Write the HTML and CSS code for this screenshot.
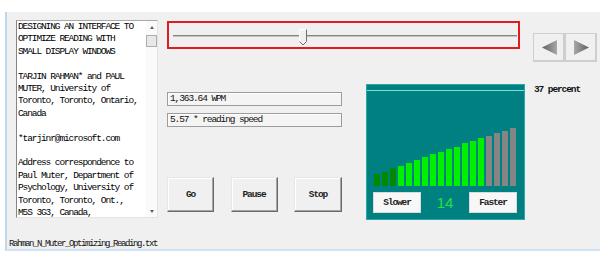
FILE: index.html
```html
<!DOCTYPE html>
<html>
<head>
    <meta charset="utf-8">
    <meta name="viewport" content="width=device-width">
    <title>Reader</title>
    <link rel="stylesheet" href="styles.css">
</head>
<body>
    <div class="window">
        <div class="main">
            <div class="reader">
                <div class="reader-text">
                    <p>DESIGNING AN INTERFACE TO<br>OPTIMIZE READING WITH<br>SMALL DISPLAY WINDOWS</p>
                    <p>TARJIN RAHMAN* and PAUL<br>MUTER, University of<br>Toronto, Toronto, Ontario,<br>Canada</p>
                    <p>*tarjinr@microsoft.com</p>
                    <p>Address correspondence to<br>Paul Muter, Department of<br>Psychology, University of<br>Toronto, Toronto, Ont.,<br>M5S 3G3, Canada,</p>
                </div>
                <div class="scrollbar">
                    <div class="sb-btn"><span class="arrow-up"></span></div>
                    <div class="sb-thumb"></div>
                    <div class="sb-track"></div>
                    <div class="sb-btn"><span class="arrow-down"></span></div>
                </div>
            </div>

            <div class="controls">
                <div class="top-row">
                    <div class="slider">
                        <div class="groove"></div>
                        <svg class="thumb" width="9" height="17" viewBox="0 0 9 17">
                            <polygon points="0.5,0.5 7.5,0.5 7.5,12.5 4,16 0.5,12.5" fill="#f0f0f0"/>
                            <polyline points="0.5,12.5 0.5,0.5 7.5,0.5" fill="none" stroke="#ffffff"/>
                            <polyline points="7.5,0.5 7.5,12.5 4,16 0.5,12.5" fill="none" stroke="#6f6f6f"/>
                        </svg>
                    </div>
                    <div class="nav">
                        <button class="nav-btn" type="button">
                            <svg width="15" height="15" viewBox="0 0 15 15">
                                <defs>
                                    <linearGradient id="gl" x1="0" y1="0" x2="1" y2="0">
                                        <stop offset="0" stop-color="#5f5f5f"/>
                                        <stop offset="1" stop-color="#a8a8a8"/>
                                    </linearGradient>
                                </defs>
                                <polygon points="15,0 0,7.5 15,15" fill="url(#gl)"/>
                            </svg>
                        </button>
                        <button class="nav-btn" type="button">
                            <svg width="15" height="15" viewBox="0 0 15 15">
                                <defs>
                                    <linearGradient id="gr" x1="0" y1="0" x2="1" y2="0">
                                        <stop offset="0" stop-color="#a8a8a8"/>
                                        <stop offset="1" stop-color="#5f5f5f"/>
                                    </linearGradient>
                                </defs>
                                <polygon points="0,0 15,7.5 0,15" fill="url(#gr)"/>
                            </svg>
                        </button>
                    </div>
                </div>

                <div class="mid">
                    <div class="fields">
                        <div class="field">1,363.64 WPM</div>
                        <div class="field">5.57 * reading speed</div>
                        <div class="buttons">
                            <button class="btn" type="button">Go</button>
                            <button class="btn" type="button">Pause</button>
                            <button class="btn btn-wide" type="button">Stop</button>
                        </div>
                    </div>

                    <div class="panel">
                        <div class="bars">
                            <div class="bar dim" style="height: 12px"></div>
                            <div class="bar dim" style="height: 14px"></div>
                            <div class="bar dim" style="height: 18px"></div>
                            <div class="bar on" style="height: 20px"></div>
                            <div class="bar on" style="height: 23px"></div>
                            <div class="bar on" style="height: 26px"></div>
                            <div class="bar on" style="height: 29px"></div>
                            <div class="bar on" style="height: 32px"></div>
                            <div class="bar on" style="height: 34px"></div>
                            <div class="bar on" style="height: 37px"></div>
                            <div class="bar on" style="height: 39px"></div>
                            <div class="bar on" style="height: 43px"></div>
                            <div class="bar on" style="height: 45px"></div>
                            <div class="bar on" style="height: 48px"></div>
                            <div class="bar off" style="height: 50px"></div>
                            <div class="bar off" style="height: 53px"></div>
                            <div class="bar off" style="height: 55px"></div>
                            <div class="bar off" style="height: 58px"></div>
                        </div>
                        <div class="speed-row">
                            <button class="speed-btn" type="button">Slower</button>
                            <span class="speed-value">14</span>
                            <button class="speed-btn" type="button">Faster</button>
                        </div>
                    </div>

                    <div class="pct">37 percent</div>
                </div>
            </div>
        </div>

        <div class="footer">Rahman_N_Muter_Optimizing_Reading.txt</div>
    </div>
</body>
</html>
```

FILE: styles.css
```css
body {
    margin: 0;
    background-color: #fff;
    font-family: "Liberation Mono", monospace;
    font-size: 9.5px;
    letter-spacing: -1.1px;
    color: #111;
}

.window {
    margin: 12px 0 0 5px;
    height: 237px;
    border-left: 2px solid #bfd7ee;
    border-bottom: 2px solid #cfe4f6;
    background-color: #f0f0f0;
    display: flex;
    flex-direction: column;
}

.main {
    display: flex;
    padding: 8px 0 0 9px;
}

/* text box with scrollbar */
.reader {
    width: 142px;
    height: 198px;
    box-sizing: border-box;
    border-left: 1px solid #858585;
    border-top: 1px solid #a8a8a8;
    border-right: 1px solid #e4e4e4;
    border-bottom: 1px solid #e4e4e4;
    background-color: #fff;
    display: flex;
}

.reader-text {
    flex: 1;
    padding-left: 1px;
    line-height: 12.4px;
    white-space: nowrap;
    color: #000;
}

.reader-text p {
    margin: 0 0 12.4px;
}

.scrollbar {
    width: 11px;
    display: flex;
    flex-direction: column;
    background-color: #fafafa;
}

.sb-btn {
    height: 12px;
    display: flex;
    align-items: center;
    justify-content: center;
}

.arrow-up {
    border-left: 2.5px solid transparent;
    border-right: 2.5px solid transparent;
    border-bottom: 3px solid #606060;
}

.arrow-down {
    border-left: 2.5px solid transparent;
    border-right: 2.5px solid transparent;
    border-top: 3px solid #606060;
}

.sb-thumb {
    height: 12px;
    margin-top: 2px;
    box-sizing: border-box;
    border: 1px solid #adadad;
    background-color: #e8e8e8;
}

.sb-track {
    flex: 1;
}

/* right side */
.controls {
    margin-left: 9px;
    display: flex;
    flex-direction: column;
}

.top-row {
    display: flex;
    align-items: flex-start;
    margin-top: 1px;
}

.slider {
    position: relative;
    width: 353px;
    height: 28px;
    box-sizing: border-box;
    border: 2px solid #e21b23;
    padding: 12px 1px 0 4px;
}

.groove {
    height: 1px;
    background-color: #858585;
    border-bottom: 1px solid #c4c4c4;
}

.thumb {
    position: absolute;
    left: 130px;
    top: 6px;
}

.nav {
    display: flex;
    margin: 12px 0 0 13px;
}

.nav-btn {
    width: 32px;
    height: 29px;
    padding: 0;
    box-sizing: border-box;
    background-color: #f0f0f0;
    border: 1px solid;
    border-color: #fff #8e8e8e #8e8e8e #fff;
    box-shadow: inset -1px -1px #cdcdcd;
    outline: 1px solid #cfcfcf;
    outline-offset: -1px;
    display: flex;
    align-items: center;
    justify-content: center;
}

.mid {
    display: flex;
    align-items: flex-start;
    margin-top: 22px;
}

.fields {
    width: 175px;
    padding-top: 8px;
}

.field {
    height: 14px;
    box-sizing: border-box;
    border: 1px solid #9c9c9c;
    box-shadow: inset 1px 1px #fff;
    background-color: #f4f4f4;
    padding-left: 2px;
    line-height: 12px;
}

.field + .field {
    margin-top: 7px;
}

.buttons {
    display: flex;
    justify-content: space-between;
    margin-top: 50px;
}

.btn {
    width: 47px;
    height: 35px;
    padding: 0;
    box-sizing: border-box;
    background-color: #f0f0f0;
    border: 1px solid;
    border-color: #e6e6e6 #6b6b6b #6b6b6b #e6e6e6;
    box-shadow: inset -1px -1px #a4a4a4, inset 1px 1px #fff;
    font-family: inherit;
    font-size: 9.5px;
    font-weight: bold;
    letter-spacing: -1.1px;
    color: #222;
}

.btn-wide {
    width: 48px;
}

/* speed meter */
.panel {
    width: 159px;
    height: 136px;
    margin-left: 24px;
    box-sizing: border-box;
    border: 1px solid #2aa8a8;
    background-color: #008080;
    padding-top: 5px;
}

.bars {
    height: 95px;
    border-top: 1px solid #7fdcdc;
    display: flex;
    align-items: flex-end;
    gap: 2px;
    padding-left: 7px;
}

.bar {
    width: 6px;
}

.bar.dim {
    background-color: #008a00;
}

.bar.on {
    background-color: #00f000;
}

.bar.off {
    background-color: #858585;
}

.speed-row {
    display: flex;
    align-items: center;
    margin-top: 6px;
    padding: 0 7px 0 6px;
}

.speed-btn {
    width: 48px;
    height: 21px;
    padding: 0;
    background-color: #f7f7f7;
    border: 1px solid #dadada;
    font-family: inherit;
    font-size: 9.5px;
    font-weight: bold;
    letter-spacing: -1.1px;
    color: #222;
}

.speed-value {
    flex: 1;
    text-align: center;
    font-family: "Liberation Sans", Arial, sans-serif;
    font-size: 15px;
    letter-spacing: 0;
    color: #22e044;
}

.pct {
    margin: 1px 0 0 9px;
    font-weight: bold;
    line-height: 9px;
}

.footer {
    margin-top: auto;
    padding-left: 2px;
    font-size: 9px;
    letter-spacing: -1.4px;
    line-height: 10px;
}
```
